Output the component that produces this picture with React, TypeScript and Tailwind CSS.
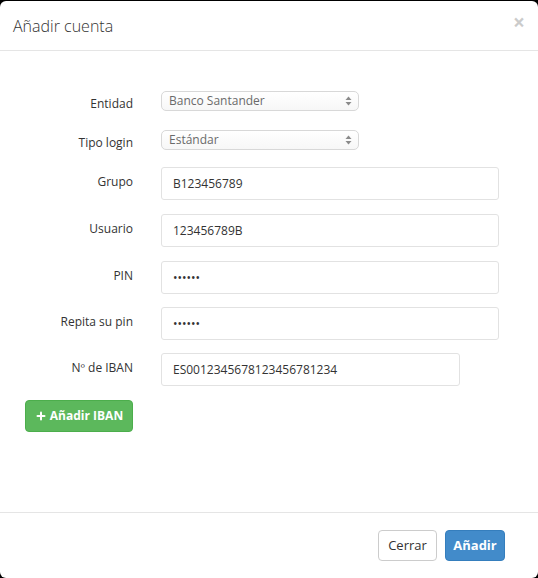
import { Plus } from "lucide-react";

const font = { fontFamily: '"Open Sans", "Liberation Sans", sans-serif' };

function SelectBox({ value }: { value: string }) {
  return (
    <div className="flex h-[20px] w-[198px] items-center justify-between rounded-[5px] border border-[#d8d8d8] bg-gradient-to-b from-white to-[#f7f7f7] pl-[7px] pr-[6px]">
      <span className="text-[12px] leading-none text-[#6a6a6a]">{value}</span>
      <svg width="7" height="10" viewBox="0 0 7 10" className="text-[#8a8a8a]">
        <path d="M3.5 0.5 L6.5 4 H0.5 Z" fill="currentColor" />
        <path d="M3.5 9.5 L6.5 6 H0.5 Z" fill="currentColor" />
      </svg>
    </div>
  );
}

function TextBox({ value, wide = true }: { value: string; wide?: boolean }) {
  return (
    <div
      className={`flex h-[33px] items-center rounded-[3px] border border-[#e2e2e2] bg-white px-[11px] text-[12px] text-[#333] ${
        wide ? "w-[338px]" : "w-[299px]"
      }`}
    >
      {value}
    </div>
  );
}

function Row({ label, children, top, pt }: { label: string; children: React.ReactNode; top: string; pt: string }) {
  return (
    <div className={`flex items-start ${top}`}>
      <label className={`w-[133px] shrink-0 text-right text-[12px] leading-[18px] text-[#333] ${pt}`}>{label}</label>
      <div className="ml-[28px]">{children}</div>
    </div>
  );
}

export default function App() {
  return (
    <div className="h-[578px] w-[538px] overflow-hidden bg-black pt-px" style={font}>
      <div className="flex h-[577px] flex-col rounded-[6px] bg-white">
        <div className="relative flex h-[50px] items-center border-b border-[#e5e5e5] px-[13px]">
          <h4 className="text-[16px] font-light leading-none text-[#333]">Añadir cuenta</h4>
          <button className="absolute right-[13px] top-[11px] text-[21px] font-bold leading-none text-black opacity-20">
            ×
          </button>
        </div>

        <div className="flex-1 pt-[40px]">
          <Row label="Entidad" top="" pt="pt-[4px]">
            <SelectBox value="Banco Santander" />
          </Row>
          <Row label="Tipo login" top="mt-[17px]" pt="pt-[4px]">
            <SelectBox value="Estándar" />
          </Row>
          <Row label="Grupo" top="mt-[15px]" pt="pt-[6px]">
            <TextBox value="B123456789" />
          </Row>
          <Row label="Usuario" top="mt-[14px]" pt="pt-[6px]">
            <TextBox value="123456789B" />
          </Row>
          <Row label="PIN" top="mt-[14px]" pt="pt-[6px]">
            <TextBox value="••••••" />
          </Row>
          <Row label="Repita su pin" top="mt-[13px]" pt="pt-[6px]">
            <TextBox value="••••••" />
          </Row>
          <Row label="Nº de IBAN" top="mt-[13px]" pt="pt-[6px]">
            <TextBox value="ES0012345678123456781234" wide={false} />
          </Row>
          <div className="mt-[14px] pl-[25px]">
            <button className="flex h-[32px] w-[108px] items-center justify-center gap-[3px] rounded-[4px] border border-[#4cae4c] bg-[#5cb85c] text-[12px] font-bold text-white">
              <Plus size={12} strokeWidth={4} />
              Añadir IBAN
            </button>
          </div>
        </div>

        <div className="flex h-[66px] items-start justify-end gap-[8px] border-t border-[#e5e5e5] pr-[33px] pt-[17px]">
          <button className="h-[31px] w-[59px] rounded-[4px] border border-[#ccc] bg-white text-[13px] text-[#333]">
            Cerrar
          </button>
          <button className="h-[31px] w-[60px] rounded-[4px] border border-[#357ebd] bg-[#428bca] text-[13px] font-bold text-white">
            Añadir
          </button>
        </div>
      </div>
    </div>
  );
}
